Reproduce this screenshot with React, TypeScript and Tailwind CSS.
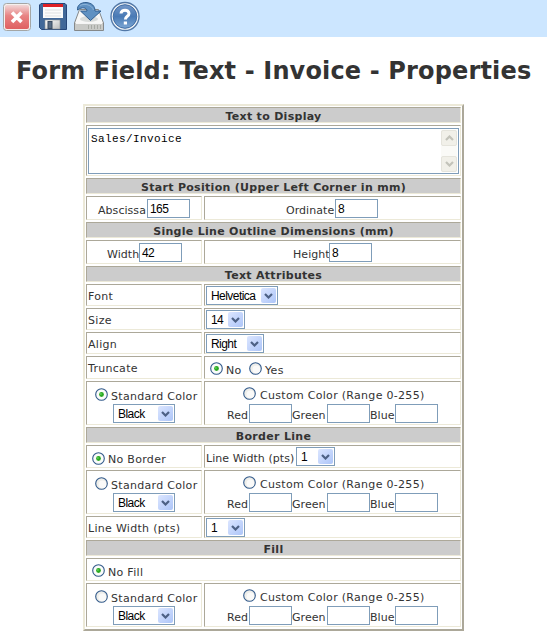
import type { ReactNode } from 'react';

const Chevron = ({ up = false, pale = false }: { up?: boolean; pale?: boolean }) => (
  <svg width="9" height="6" viewBox="0 0 9 6" className={up ? 'rotate-180' : ''}>
    <path d="M1 1 L4.5 4.5 L8 1" fill="none" stroke={pale ? '#c3c3ba' : '#4d6185'} strokeWidth="2.2" />
  </svg>
);

const Select = ({ value, w, className = '' }: { value: string; w: string; className?: string }) => (
  <div className={`flex h-[19px] shrink-0 items-center justify-between border border-[#7f9db9] bg-white pl-[4px] pr-px font-['Liberation_Sans',Arial,sans-serif] text-[12px] tracking-[-0.55px] text-black ${w} ${className}`}>
    <span className="pt-px">{value}</span>
    <span className="flex h-[15px] w-[15px] items-center justify-center rounded-[2px] bg-linear-to-br from-[#dce6ff] to-[#adc5f8]">
      <Chevron />
    </span>
  </div>
);

const Input = ({ value = '' }: { value?: string }) => (
  <div className="flex h-[19px] w-[43px] shrink-0 items-center border border-[#7f9db9] bg-white pl-[2px] pt-px font-['Liberation_Sans',Arial,sans-serif] text-[12px] tracking-[-0.6px] text-black">
    {value}
  </div>
);

const Radio = ({ on = false }: { on?: boolean }) => (
  <svg width="13" height="13" viewBox="0 0 13 13" className="shrink-0">
    <circle cx="6.5" cy="6.5" r="5.8" fill={on ? '#fbfcfa' : '#eeeeea'} stroke="#31598a" strokeWidth="1.1" />
    {!on && <circle cx="7.4" cy="7.4" r="3.8" fill="#fafaf9" />}
    {on && <circle cx="6.5" cy="6.5" r="2.4" fill="#2aa822" />}
    {on && <circle cx="5.9" cy="5.9" r="1" fill="#58cf4f" />}
  </svg>
);

const edge = 'border border-t-[#aca899] border-l-[#aca899] border-r-[#ece9d8] border-b-[#ece9d8]';

const Head = ({ children }: { children: ReactNode }) => (
  <div className={`col-span-2 flex h-[16px] items-center justify-center bg-[#cccccc] pt-[2px] font-bold tracking-[0.3px] ${edge}`}>
    {children}
  </div>
);

const Cell = ({ children, className = '' }: { children?: ReactNode; className?: string }) => (
  <div className={`flex items-start ${edge} ${className}`}>{children}</div>
);

const Label = ({ children, className = '' }: { children: ReactNode; className?: string }) => (
  <span className={`shrink-0 leading-[13px] tracking-[0.3px] ${className}`}>{children}</span>
);

const FieldLabel = ({ children, w }: { children: ReactNode; w: string }) => (
  <span className={`mt-[5px] shrink-0 leading-[13px] tracking-[0.05px] ${w}`}>{children}</span>
);

const ColorCells = ({ on = false }: { on?: boolean }) => (
  <>
    <Cell className="h-[44px] flex-col">
      <div className="flex pl-[8px] pt-[6px]">
        <Radio on={on} />
        <Label className="ml-[3px] mt-[2px]">Standard Color</Label>
      </div>
      <Select value="Black" w="w-[62px]" className="ml-[26px] mt-px" />
    </Cell>
    <Cell className="h-[44px] flex-col">
      <div className="flex pl-[38px] pt-[5px]">
        <Radio />
        <Label className="ml-[4px] mt-[2px]">Custom Color (Range 0-255)</Label>
      </div>
      <div className="mt-[2px] flex pl-[22px]">
        <FieldLabel w="w-[22px]">Red</FieldLabel>
        <Input />
        <FieldLabel w="w-[35px]">Green</FieldLabel>
        <Input />
        <FieldLabel w="w-[25px]">Blue</FieldLabel>
        <Input />
      </div>
    </Cell>
  </>
);

const SelectRow = ({ label, value, w }: { label: string; value: string; w: string }) => (
  <>
    <Cell className="h-[22px] pl-px"><Label className="mt-[5px]">{label}</Label></Cell>
    <Cell className="h-[22px] pl-px pt-px"><Select value={value} w={w} /></Cell>
  </>
);

const Toolbar = () => (
  <div className="h-[37px] bg-[#cce6ff]">
    <svg width="150" height="37" viewBox="0 0 150 37">
      <defs>
        <linearGradient id="close" x1="0" y1="0" x2="0" y2="1">
          <stop offset="0" stopColor="#f1d7d7" />
          <stop offset="0.45" stopColor="#e88383" />
          <stop offset="1" stopColor="#df6060" />
        </linearGradient>
        <linearGradient id="metal" x1="0" y1="0" x2="1" y2="1">
          <stop offset="0" stopColor="#ffffff" />
          <stop offset="1" stopColor="#bcbcbc" />
        </linearGradient>
        <linearGradient id="help" x1="0" y1="0" x2="0" y2="1">
          <stop offset="0" stopColor="#7598c8" />
          <stop offset="0.5" stopColor="#497ab5" />
          <stop offset="1" stopColor="#7da7d4" />
        </linearGradient>
      </defs>
      <rect x="3.5" y="3.5" width="27" height="27" rx="3" fill="#f5f0ed" stroke="#a4a6a5" />
      <rect x="5" y="5" width="24" height="24" rx="2" fill="url(#close)" />
      <path d="M12 12.500 L21.500 22 M21.500 12.500 L12 22" stroke="#fff" strokeWidth="3.6" />
      <path d="M41 3.500 H65 L66.500 5 V29.500 H41.500 L39.500 27.500 V5 Z" fill="#416899" stroke="#26477a" />
      <rect x="43" y="4" width="20" height="14" fill="#fbfbfb" />
      <rect x="43" y="4" width="20" height="3" fill="#df1f23" />
      <path d="M45 10 H61 M45 13 H61 M45 16 H61" stroke="#d2d6d7" strokeWidth=".7" />
      <path d="M45 20 H60 V29 H45 Z" fill="url(#metal)" stroke="#8c9295" strokeWidth=".6" />
      <rect x="48" y="21.500" width="4" height="7" fill="#576b84" stroke="#394a60" />
      <path d="M79.500 9.500 H98.500 L103.500 23 V30.500 H74.500 V23 Z" fill="#f7f7f6" stroke="#858889" />
      <path d="M75 23 H103 V30 H75 Z" fill="#c9cac7" />
      <path d="M76 23.500 H102" stroke="#f5f5f5" />
      <path d="M88.500 25 V29 M91.500 25 V29 M94.500 25 V29 M97.500 25 V29 M100.500 25 V29" stroke="#92958f" strokeWidth=".6" />
      <ellipse cx="89" cy="19" rx="9" ry="3" fill="#d9dcdb" />
      <path d="M77.500 10 C77 5 81 2.500 86 2.500 C92 3 95 6 95 11 H101 L90.500 20.500 L80.500 11 H87 C87 7.500 82 6.500 77.500 10 Z" fill="#5f91c2" stroke="#315f91" />
      <path d="M80 5.500 C85 3 92 5 93.500 10" fill="none" stroke="#8bb3d8" />
      <circle cx="125" cy="16.500" r="14" fill="#f5f7f8" stroke="#5278a7" strokeWidth="1.400" />
      <circle cx="125" cy="16.500" r="11.800" fill="url(#help)" stroke="#3f6ca3" />
      <path d="M121 13.500 C121 9 129 9 129 13.500 C129 16.500 125.400 16 125.400 19.500" fill="none" stroke="#fff" strokeWidth="3" />
      <rect x="123.800" y="21.500" width="3.200" height="3" fill="#fff" />
    </svg>
  </div>
);

export default function App() {
  return (
    <div className="h-[640px] w-[547px] overflow-hidden bg-white font-['DejaVu_Sans',Verdana,sans-serif] text-[11px] leading-[13px] text-[#333333]">
      <Toolbar />
      <h1 className="ml-[16px] mt-[19px] h-[30px] whitespace-nowrap text-[24px] font-bold leading-[31px] tracking-[0.15px]">
        Form Field: Text - Invoice - Properties
      </h1>
      <div className="ml-[83px] mt-[18px] grid h-[527px] w-[381px] grid-cols-[116px_257px] content-start gap-[2px] whitespace-nowrap border-2 border-b-[#aca899] border-l-[#ece9d8] border-r-[#aca899] border-t-[#ece9d8] pl-px pt-px">
        <Head>Text to Display</Head>
        <Cell className="col-span-2 h-[51px] pl-px pt-[2px]">
          <div className="flex h-[46px] w-[371px] justify-between border border-[#7f9db9] p-px font-['Liberation_Mono','Courier_New',monospace] text-[11px] text-black">
            <span className="pl-px pt-[3px] tracking-[0.4px]">Sales/Invoice</span>
            <div className="flex w-[16px] flex-col justify-between bg-[#fafaf7]">
              {[true, false].map((up) => (
                <span key={String(up)} className="flex h-[16px] items-center justify-center rounded-[2px] border border-[#e5e4dc] bg-[#f1f0e9]">
                  <Chevron up={up} pale />
                </span>
              ))}
            </div>
          </div>
        </Cell>
        <Head>Start Position (Upper Left Corner in mm)</Head>
        <Cell className="h-[24px] pl-[11px] pt-[2px]">
          <FieldLabel w="w-[49px]">Abscissa</FieldLabel><Input value="165" />
        </Cell>
        <Cell className="h-[24px] pl-[81px] pt-[2px]">
          <FieldLabel w="w-[49px]">Ordinate</FieldLabel><Input value="8" />
        </Cell>
        <Head>Single Line Outline Dimensions (mm)</Head>
        <Cell className="h-[24px] pl-[20px] pt-[2px]">
          <FieldLabel w="w-[32px]">Width</FieldLabel><Input value="42" />
        </Cell>
        <Cell className="h-[24px] pl-[88px] pt-[2px]">
          <FieldLabel w="w-[36px]">Height</FieldLabel><Input value="8" />
        </Cell>
        <Head>Text Attributes</Head>
        <SelectRow label="Font" value="Helvetica" w="w-[72px]" />
        <SelectRow label="Size" value="14" w="w-[39px]" />
        <SelectRow label="Align" value="Right" w="w-[58px]" />
        <Cell className="h-[23px] pl-px"><Label className="mt-[5px]">Truncate</Label></Cell>
        <Cell className="h-[23px] pl-[5px] pt-[5px]">
          <Radio on />
          <Label className="ml-[3px] mt-[2px] w-[23px]">No</Label>
          <Radio />
          <Label className="ml-[3px] mt-[2px]">Yes</Label>
        </Cell>
        <ColorCells on />
        <Head>Border Line</Head>
        <Cell className="h-[23px] pl-[5px] pt-[6px]">
          <Radio on />
          <Label className="ml-[3px] mt-px">No Border</Label>
        </Cell>
        <Cell className="h-[23px] pl-px pt-px">
          <FieldLabel w="w-[90px]">Line Width (pts)</FieldLabel>
          <Select value="1" w="w-[39px]" />
        </Cell>
        <ColorCells />
        <SelectRow label="Line Width (pts)" value="1" w="w-[39px]" />
        <Head>Fill</Head>
        <Cell className="col-span-2 h-[23px] pl-[5px] pt-[5px]">
          <Radio on />
          <Label className="ml-[3px] mt-[2px]">No Fill</Label>
        </Cell>
        <ColorCells />
      </div>
    </div>
  );
}
